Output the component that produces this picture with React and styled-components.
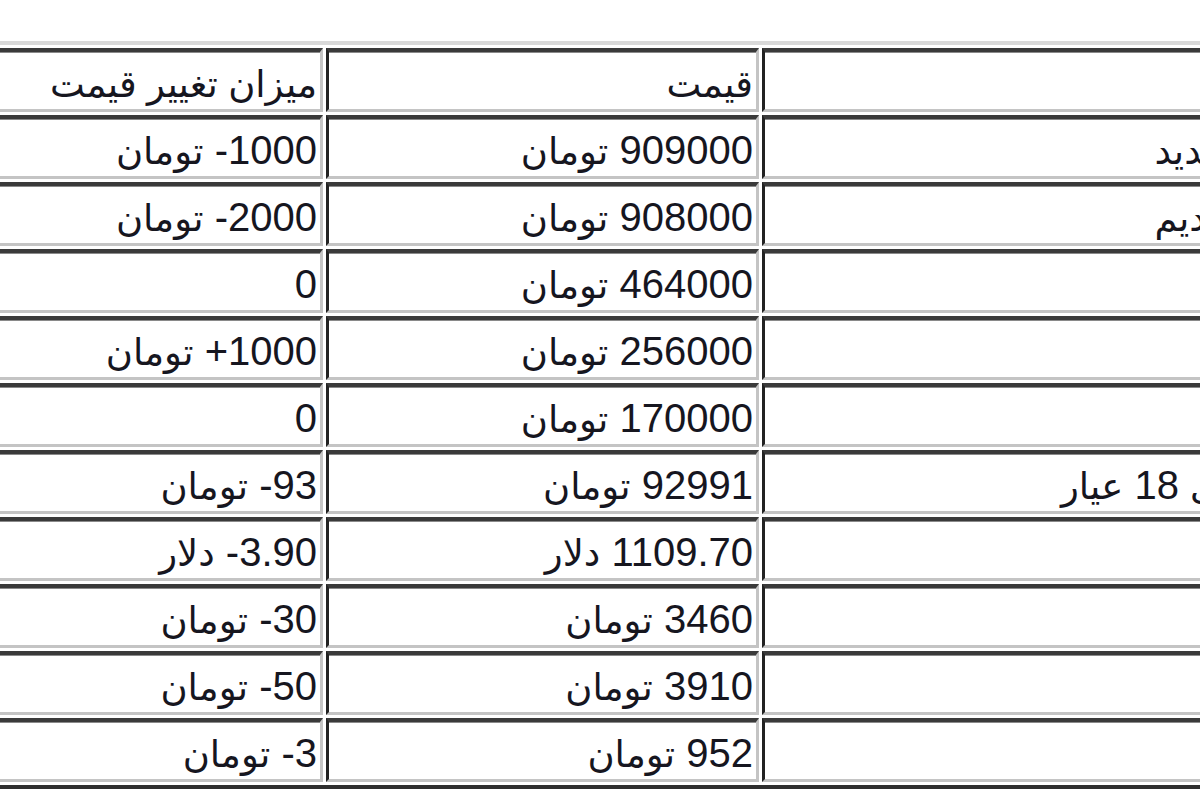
import React from 'react'
import styled, { createGlobalStyle } from 'styled-components'

const GlobalStyle = createGlobalStyle`
  html, body {
    margin: 0;
    padding: 0;
    background: #fff;
    overflow: hidden;
  }
`

const Page = styled.div`
  width: 1200px;
  height: 800px;
  overflow: hidden;
  padding-top: 41px;
  box-sizing: border-box;
`

const Table = styled.table`
  direction: rtl;
  table-layout: fixed;
  width: 1489px;
  margin-left: -84px;
  border-collapse: separate;
  border-spacing: 3px;
  border-style: solid;
  border-width: 4px;
  border-color: #d9d9d9 #2e2e2e #2e2e2e #d9d9d9;
  font-family: "Liberation Sans", "DejaVu Sans", sans-serif;
  font-size: 40px;
  color: #16161f;
`

const Cell = styled.td`
  box-sizing: border-box;
  width: ${p => p.$w}px;
  height: 64px;
  padding: 6px 3px 0;
  text-align: right;
  vertical-align: middle;
  white-space: nowrap;
  overflow: hidden;
  border-style: solid;
  border-width: 4px 3px 3px 3px;
  border-color: #3a3a3a #c4c4c4 #c4c4c4 #222;
  box-shadow: inset 0 1px 0 #8a8a8a;
`

// Persian words come from the fallback font, which runs wider than the digits
const Word = styled.span`
  font-size: 37px;
`

const rows = [
  [['عنوان'], ['قیمت'], ['میزان تغییر قیمت']],
  [['سکه طرح جدید'], ['909000 ', 'تومان'], ['1000- ', 'تومان']],
  [['سکه طرح قدیم'], ['908000 ', 'تومان'], ['2000- ', 'تومان']],
  [['نیم سکه'], ['464000 ', 'تومان'], ['0']],
  [['ربع سکه'], ['256000 ', 'تومان'], ['1000+ ', 'تومان']],
  [['سکه گرمی'], ['170000 ', 'تومان'], ['0']],
  [['هر گرم طلای', ' 18 ', 'عیار'], ['92991 ', 'تومان'], ['93- ', 'تومان']],
  [['انس طلا'], ['1109.70 ', 'دلار'], ['3.90- ', 'دلار']],
  [['دلار'], ['3460 ', 'تومان'], ['30- ', 'تومان']],
  [['یورو'], ['3910 ', 'تومان'], ['50- ', 'تومان']],
  [['درهم'], ['952 ', 'تومان'], ['3- ', 'تومان']],
]

const widths = [636, 433, 400]

const renderParts = parts =>
  parts.map((p, k) =>
    /[\u0600-\u06FF]/.test(p)
      ? <Word key={k}>{p}</Word>
      : <React.Fragment key={k}>{p}</React.Fragment>
  )

const App = () => {
  return (
    <Page>
      <GlobalStyle />
      <Table>
        <tbody>
          {rows.map((r, i) => (
            <tr key={i}>
              {r.map((c, j) => (
                <Cell key={j} $w={widths[j]}>{renderParts(c)}</Cell>
              ))}
            </tr>
          ))}
        </tbody>
      </Table>
    </Page>
  )
}

export default App
